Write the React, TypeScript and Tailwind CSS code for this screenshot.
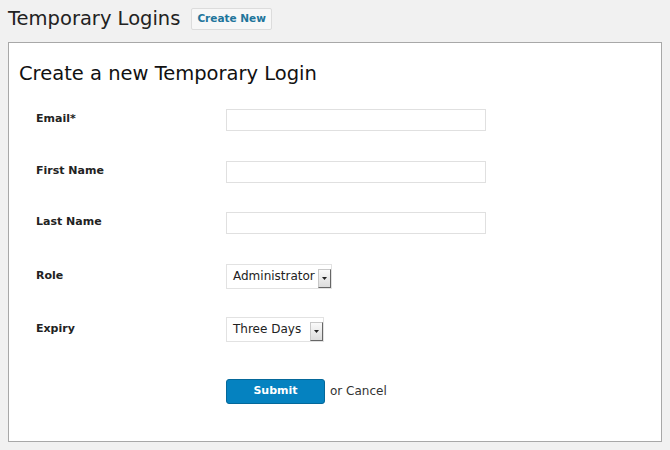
const fields = [
  { label: "Email*", gap: "mb-[30px]" },
  { label: "First Name", gap: "mb-[29px]" },
  { label: "Last Name", gap: "mb-[30px]" },
];

const SelectBox = ({ value, width }: { value: string; width: string }) => (
  <div className={`flex h-[25px] items-stretch bg-white border border-[#e2e2e2] ${width}`}>
    <span className="flex-1 pl-[6px] flex items-center text-[12px] text-[#222] whitespace-nowrap">{value}</span>
    <span className="mt-[4px] mb-0 w-[13px] flex items-center justify-center bg-gradient-to-b from-[#fafafa] to-[#dcdcdc] border border-[#c8c8c8] border-r-[#666] border-b-[#666]">
      <svg width="5" height="3" viewBox="0 0 5 3">
        <path d="M0 0h5L2.5 3z" fill="#222" />
      </svg>
    </span>
  </div>
);

export default function App() {
  return (
    <div className="w-[670px] h-[450px] bg-[#f1f1f1] pl-2 pr-2 pt-[6px] font-['DejaVu_Sans',sans-serif] text-[#222]">
      <div className="flex items-center gap-[11px] h-[26px]">
        <h1 className="text-[19.5px] leading-none text-[#222]">Temporary Logins</h1>
        <button className="h-[22px] px-[5px] bg-[#f7f7f7] border border-[#dcdcdc] rounded-[2px] text-[10.5px] font-bold text-[#21759b]">
          Create New
        </button>
      </div>
      <div className="mt-[10px] h-[400px] w-[654px] bg-white border border-[#a8a8a8] pl-[10px] pt-[21px]">
        <h2 className="text-[19.5px] leading-none text-[#111]">Create a new Temporary Login</h2>
        <div className="mt-[25px] flex flex-col">
          {fields.map((f) => (
            <div key={f.label} className={`flex items-center h-[22px] ${f.gap}`}>
              <label className="w-[207px] pl-[17px] text-[11px] font-bold">{f.label}</label>
              <input type="text" className="w-[260px] h-[22px] border border-[#e0e0e0] bg-white outline-none" />
            </div>
          ))}
          <div className="flex items-center h-[25px] mb-[28px]">
            <label className="w-[207px] pl-[17px] text-[11px] font-bold">Role</label>
            <SelectBox value="Administrator" width="w-[106px]" />
          </div>
          <div className="flex items-center h-[25px]">
            <label className="w-[207px] pl-[17px] text-[11px] font-bold">Expiry</label>
            <SelectBox value="Three Days" width="w-[98px]" />
          </div>
          <div className="flex items-center mt-[37px] pl-[207px] gap-[5px]">
            <button className="w-[99px] h-[25px] bg-[#0582c0] border border-[#04689a] rounded-[3px] text-white text-[11px] font-bold">
              Submit
            </button>
            <span className="text-[12px] text-[#333]">or Cancel</span>
          </div>
        </div>
      </div>
    </div>
  );
}
